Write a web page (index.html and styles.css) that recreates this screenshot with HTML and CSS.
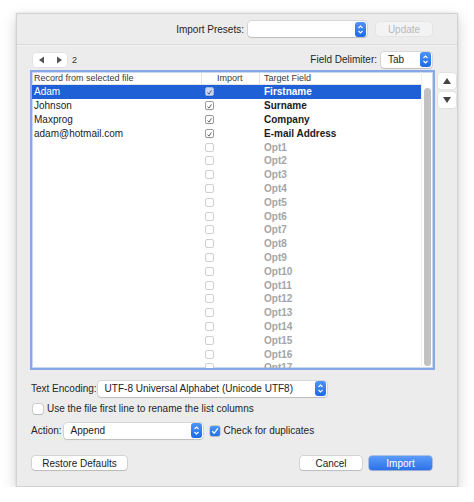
FILE: index.html
```html
<!DOCTYPE html>
<html>
<head>
<meta charset="utf-8">
<link rel="stylesheet" href="styles.css">
</head>
<body>
<div class="window">
  <div class="presets-bar">
    <span class="label">Import Presets:</span>
    <div class="popup popup-presets"><span class="popup-text"></span><span class="stepper"><svg viewBox="0 0 11 15" width="11" height="15"><path d="M3.5 6 L5.5 4 L7.5 6 M3.5 9 L5.5 11 L7.5 9" fill="none" stroke="#fff" stroke-width="1.1"/></svg></span></div>
    <div class="btn btn-disabled btn-update">Update</div>
  </div>
  <div class="content">
    <div class="toolbar-row">
      <div class="nav-seg">
        <span class="nav-btn"><svg viewBox="0 0 8 8" width="8" height="8"><path d="M6 0.5 L6 7.5 L1 4 Z" fill="#555"/></svg></span>
        <span class="nav-btn"><svg viewBox="0 0 8 8" width="8" height="8"><path d="M2 0.5 L2 7.5 L7 4 Z" fill="#555"/></svg></span>
      </div>
      <span class="page-num">2</span>
      <span class="spacer"></span>
      <span class="label">Field Delimiter:</span>
      <div class="popup popup-delim"><span class="popup-text">Tab</span><span class="stepper"><svg viewBox="0 0 11 15" width="11" height="15"><path d="M3.5 6 L5.5 4 L7.5 6 M3.5 9 L5.5 11 L7.5 9" fill="none" stroke="#fff" stroke-width="1.1"/></svg></span></div>
    </div>
    <div class="table-area">
      <div class="table-frame">
        <div class="table-main">
          <div class="thead">
            <span class="th">Record from selected file</span>
            <span class="th th-sep">Import</span>
            <span class="th th-sep">Target Field</span>
          </div>
          <div class="tbody">
            <div class="tr selected"><span class="td">Adam</span><span class="td tc"><span class="cb cb-on"><svg viewBox="0 0 9 9" width="9" height="9"><path d="M2 4.6 L3.8 6.6 L7 1.8" fill="none" stroke="#333" stroke-width="1"/></svg></span></span><span class="td tf">Firstname</span></div>
            <div class="tr"><span class="td">Johnson</span><span class="td tc"><span class="cb cb-on"><svg viewBox="0 0 9 9" width="9" height="9"><path d="M2 4.6 L3.8 6.6 L7 1.8" fill="none" stroke="#333" stroke-width="1"/></svg></span></span><span class="td tf">Surname</span></div>
            <div class="tr"><span class="td">Maxprog</span><span class="td tc"><span class="cb cb-on"><svg viewBox="0 0 9 9" width="9" height="9"><path d="M2 4.6 L3.8 6.6 L7 1.8" fill="none" stroke="#333" stroke-width="1"/></svg></span></span><span class="td tf">Company</span></div>
            <div class="tr"><span class="td">adam@hotmail.com</span><span class="td tc"><span class="cb cb-on"><svg viewBox="0 0 9 9" width="9" height="9"><path d="M2 4.6 L3.8 6.6 L7 1.8" fill="none" stroke="#333" stroke-width="1"/></svg></span></span><span class="td tf">E-mail Address</span></div>
            <div class="tr"><span class="td"></span><span class="td tc"><span class="cb cb-off"></span></span><span class="td tf opt">Opt1</span></div>
            <div class="tr"><span class="td"></span><span class="td tc"><span class="cb cb-off"></span></span><span class="td tf opt">Opt2</span></div>
            <div class="tr"><span class="td"></span><span class="td tc"><span class="cb cb-off"></span></span><span class="td tf opt">Opt3</span></div>
            <div class="tr"><span class="td"></span><span class="td tc"><span class="cb cb-off"></span></span><span class="td tf opt">Opt4</span></div>
            <div class="tr"><span class="td"></span><span class="td tc"><span class="cb cb-off"></span></span><span class="td tf opt">Opt5</span></div>
            <div class="tr"><span class="td"></span><span class="td tc"><span class="cb cb-off"></span></span><span class="td tf opt">Opt6</span></div>
            <div class="tr"><span class="td"></span><span class="td tc"><span class="cb cb-off"></span></span><span class="td tf opt">Opt7</span></div>
            <div class="tr"><span class="td"></span><span class="td tc"><span class="cb cb-off"></span></span><span class="td tf opt">Opt8</span></div>
            <div class="tr"><span class="td"></span><span class="td tc"><span class="cb cb-off"></span></span><span class="td tf opt">Opt9</span></div>
            <div class="tr"><span class="td"></span><span class="td tc"><span class="cb cb-off"></span></span><span class="td tf opt">Opt10</span></div>
            <div class="tr"><span class="td"></span><span class="td tc"><span class="cb cb-off"></span></span><span class="td tf opt">Opt11</span></div>
            <div class="tr"><span class="td"></span><span class="td tc"><span class="cb cb-off"></span></span><span class="td tf opt">Opt12</span></div>
            <div class="tr"><span class="td"></span><span class="td tc"><span class="cb cb-off"></span></span><span class="td tf opt">Opt13</span></div>
            <div class="tr"><span class="td"></span><span class="td tc"><span class="cb cb-off"></span></span><span class="td tf opt">Opt14</span></div>
            <div class="tr"><span class="td"></span><span class="td tc"><span class="cb cb-off"></span></span><span class="td tf opt">Opt15</span></div>
            <div class="tr"><span class="td"></span><span class="td tc"><span class="cb cb-off"></span></span><span class="td tf opt">Opt16</span></div>
            <div class="tr tr-partial"><span class="td"></span><span class="td tc"><span class="cb cb-off"></span></span><span class="td tf opt">Opt17</span></div>
          </div>
        </div>
        <div class="scroll-track"><div class="scroll-thumb"></div></div>
      </div>
      <div class="side-btns">
        <div class="side-btn"><svg viewBox="0 0 10 8" width="10" height="8"><path d="M5 1 L9 7 L1 7 Z" fill="#444"/></svg></div>
        <div class="side-btn"><svg viewBox="0 0 10 8" width="10" height="8"><path d="M1 1 L9 1 L5 7 Z" fill="#444"/></svg></div>
      </div>
    </div>
    <div class="form-row enc-row">
      <span class="label">Text Encoding:</span>
      <div class="popup popup-enc"><span class="popup-text">UTF-8 Universal Alphabet (Unicode UTF8)</span><span class="stepper"><svg viewBox="0 0 11 15" width="11" height="15"><path d="M3.5 6 L5.5 4 L7.5 6 M3.5 9 L5.5 11 L7.5 9" fill="none" stroke="#fff" stroke-width="1.1"/></svg></span></div>
    </div>
    <div class="form-row chk-row">
      <span class="fcb"></span>
      <span class="label">Use the file first line to rename the list columns</span>
    </div>
    <div class="form-row action-row">
      <span class="label">Action:</span>
      <div class="popup popup-action"><span class="popup-text">Append</span><span class="stepper"><svg viewBox="0 0 11 15" width="11" height="15"><path d="M3.5 6 L5.5 4 L7.5 6 M3.5 9 L5.5 11 L7.5 9" fill="none" stroke="#fff" stroke-width="1.1"/></svg></span></div>
      <span class="fcb fcb-on"><svg viewBox="0 0 10 10" width="10" height="10"><path d="M2.3 5.2 L4.2 7.3 L7.8 2.3" fill="none" stroke="#fff" stroke-width="1.3"/></svg></span>
      <span class="label">Check for duplicates</span>
    </div>
    <div class="buttons-row">
      <div class="btn btn-restore">Restore Defaults</div>
      <span class="spacer"></span>
      <div class="btn btn-cancel">Cancel</div>
      <div class="btn btn-primary">Import</div>
    </div>
  </div>
</div>
</body>
</html>
```
FILE: styles.css
```css
* { box-sizing: border-box; }
html, body { margin: 0; padding: 0; background: #fff; }
body {
  font-family: "Liberation Sans", Arial, sans-serif;
  font-size: 10px;
  color: #222;
}
.window {
  margin: 13px 0 0 16px;
  width: 442px;
  height: 474px;
  background: #ececec;
  border: 1px solid #d2d2d2;
  box-shadow: 0 5px 14px rgba(0,0,0,0.18), 0 0 2px rgba(0,0,0,0.12);
  display: flex;
  flex-direction: column;
}
.label { color: #262626; white-space: nowrap; }
.spacer { flex: 1; }

.presets-bar {
  height: 31px;
  display: flex;
  align-items: center;
  justify-content: flex-end;
  padding-right: 25px;
  border-bottom: 1px solid #dadada;
  box-shadow: 0 1px 0 #f4f4f4;
  flex-shrink: 0;
}
.presets-bar .label { margin-right: 4px; }

.popup {
  height: 16px;
  background: #fff;
  border-radius: 3px;
  box-shadow: 0 0 0 0.5px rgba(0,0,0,0.18), 0 1px 1px rgba(0,0,0,0.12);
  display: flex;
  align-items: center;
  justify-content: space-between;
  padding-left: 7px;
}
.popup-text { color: #222; white-space: nowrap; }
.stepper {
  width: 11px;
  height: 15px;
  margin-right: 1px;
  border-radius: 3px;
  background: linear-gradient(#4d95fb, #1c6ae6);
  display: flex;
}
.popup-presets { width: 119px; }
.popup-delim { width: 51px; margin-left: 4px; }
.popup-enc { width: 229px; margin-left: 1px; }
.popup-action { width: 139px; margin-left: 2px; }

.btn {
  height: 14px;
  border-radius: 3px;
  background: #fff;
  box-shadow: 0 0 0 0.5px rgba(0,0,0,0.2), 0 1px 1px rgba(0,0,0,0.12);
  display: flex;
  align-items: center;
  justify-content: center;
  color: #222;
  white-space: nowrap;
}
.btn-update {
  width: 56px;
  margin-left: 9px;
  background: #f3f3f3;
  color: #b9b9b9;
  box-shadow: 0 0 0 0.5px rgba(0,0,0,0.06);
}

.content {
  flex: 1;
  display: flex;
  flex-direction: column;
  padding-left: 13px;
}
.toolbar-row {
  height: 17px;
  margin-top: 6px;
  display: flex;
  align-items: center;
  padding-left: 3px;
  padding-right: 25px;
}
.nav-seg {
  display: flex;
  width: 34px;
  height: 14px;
  background: #fff;
  border-radius: 3px;
  box-shadow: 0 0 0 0.5px rgba(0,0,0,0.08);
}
.nav-btn {
  flex: 1;
  display: flex;
  align-items: center;
  justify-content: center;
}
.page-num { margin-left: 5px; font-size: 9px; color: #333; }

.table-area {
  display: flex;
  margin-top: 2px;
  height: 300px;
}
.table-frame {
  width: 405px;
  height: 300px;
  border: 2px solid #86a8e6;
  box-shadow: inset 0 0 0 1px #c9d8f4;
  background: #fff;
  display: flex;
  overflow: hidden;
}
.table-main {
  flex: 1;
  display: flex;
  flex-direction: column;
  overflow: hidden;
}
.thead {
  display: grid;
  grid-template-columns: 169px 58px 1fr;
  height: 13px;
  align-items: center;
  border-bottom: 1px solid #e4e4e4;
  flex-shrink: 0;
}
.th {
  font-size: 9px;
  color: #3a3a3a;
  padding-left: 2px;
  white-space: nowrap;
}
.th-sep { border-left: 1px solid #e3e3e3; padding-left: 15px; height: 11px; line-height: 11px; }
.th-sep:last-child { padding-left: 4px; }
.tbody { display: flex; flex-direction: column; }
.tr {
  display: grid;
  grid-template-columns: 169px 58px 1fr;
  height: 13.8px;
  align-items: center;
  flex-shrink: 0;
}
.td { padding-left: 2px; white-space: nowrap; color: #1b1b1b; }
.tc { display: flex; padding-left: 4px; }
.tf { font-weight: bold; padding-left: 5px; }
.opt { color: #a5a5a5; }
.tr.selected { background: #1f60d6; }
.tr.selected .td { color: #fff; }
.tr-partial { overflow: hidden; }

.cb {
  width: 9px;
  height: 9px;
  border-radius: 2px;
  background: #fff;
  display: inline-flex;
}
.cb-on { border: 0.5px solid #9a9a9a; box-shadow: 0 0.5px 0 rgba(0,0,0,0.1); }
.cb-off { border: 0.5px solid #d0d0d0; }
.tr.selected .cb-on { background: #c6d5f3; border-color: #9db3e6; }

.scroll-track {
  width: 12px;
  border-left: 1px solid #eeeeee;
  padding: 16px 2px 1px 2px;
  flex-shrink: 0;
}
.scroll-thumb {
  width: 7px;
  height: 278px;
  background: #c2c2c2;
  border-radius: 4px;
}

.side-btns {
  display: flex;
  flex-direction: column;
  gap: 3px;
  margin-left: 3px;
  margin-top: 3px;
}
.side-btn {
  width: 18px;
  height: 16px;
  background: #fff;
  border-radius: 3px;
  box-shadow: 0 0 0 0.5px rgba(0,0,0,0.08);
  display: flex;
  align-items: center;
  justify-content: center;
}

.form-row {
  display: flex;
  align-items: center;
  padding-left: 1px;
}
.enc-row { margin-top: 10px; height: 17px; }
.chk-row { margin-top: 5px; height: 13px; padding-left: 3px; }
.chk-row .label { margin-left: 4px; }
.action-row { margin-top: 7px; height: 17px; }
.fcb {
  width: 10px;
  height: 10px;
  border-radius: 2px;
  background: #fff;
  box-shadow: 0 0 0 0.5px rgba(0,0,0,0.25), 0 0.5px 1px rgba(0,0,0,0.1);
  display: inline-flex;
}
.fcb-on {
  background: linear-gradient(#4d95fb, #2270e8);
  margin-left: 7px;
  margin-right: 4px;
}
.buttons-row {
  display: flex;
  align-items: center;
  margin-top: 17px;
  padding-left: 2px;
  padding-right: 25px;
}
.btn-restore { width: 95px; }
.btn-cancel { width: 62px; }
.btn-primary {
  width: 63px;
  margin-left: 7px;
  background: linear-gradient(#5b9cf9, #2d71ea);
  color: #fff;
  box-shadow: 0 0 0 0.5px rgba(30,90,210,0.6), 0 1px 1px rgba(0,0,0,0.12);
}
```
